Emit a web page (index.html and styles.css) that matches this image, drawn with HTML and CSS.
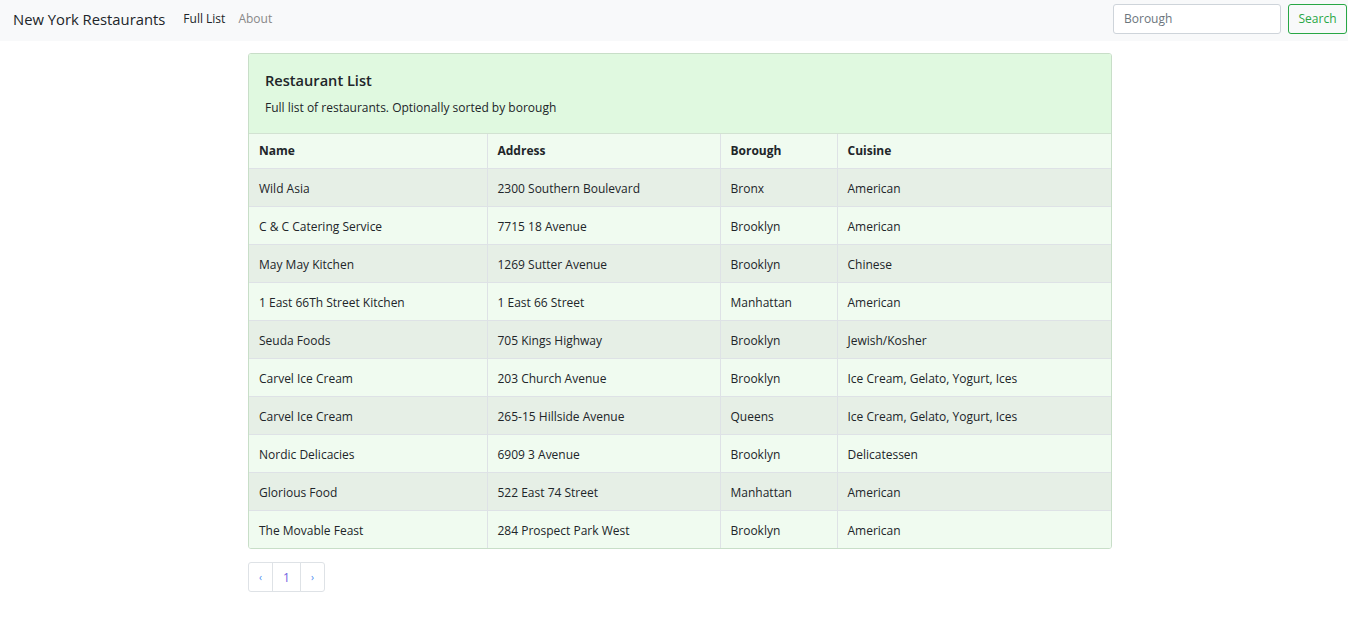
FILE: index.html
```html
<!DOCTYPE html>
<html lang="en">
<head>
<meta charset="utf-8">
<title>New York Restaurants</title>
<link rel="stylesheet" href="styles.css">
</head>
<body>
<nav class="navbar">
  <a class="brand" href="#">New York Restaurants</a>
  <ul class="nav">
    <li><a class="nav-link active" href="#">Full List</a></li>
    <li><a class="nav-link" href="#">About</a></li>
  </ul>
  <form class="search">
    <input class="search-input" type="text" placeholder="Borough">
    <button class="search-btn" type="button">Search</button>
  </form>
</nav>
<main class="container">
  <section class="card">
    <header class="card-header">
      <h1 class="card-title">Restaurant List</h1>
      <p class="card-sub">Full list of restaurants. Optionally sorted by borough</p>
    </header>
    <table class="table">
      <colgroup>
        <col class="c1"><col class="c2"><col class="c3"><col class="c4">
      </colgroup>
      <thead>
        <tr><th>Name</th><th>Address</th><th>Borough</th><th>Cuisine</th></tr>
      </thead>
      <tbody>
        <tr><td>Wild Asia</td><td>2300 Southern Boulevard</td><td>Bronx</td><td>American</td></tr>
        <tr><td>C &amp; C Catering Service</td><td>7715 18 Avenue</td><td>Brooklyn</td><td>American</td></tr>
        <tr><td>May May Kitchen</td><td>1269 Sutter Avenue</td><td>Brooklyn</td><td>Chinese</td></tr>
        <tr><td>1 East 66Th Street Kitchen</td><td>1 East 66 Street</td><td>Manhattan</td><td>American</td></tr>
        <tr><td>Seuda Foods</td><td>705 Kings Highway</td><td>Brooklyn</td><td>Jewish/Kosher</td></tr>
        <tr><td>Carvel Ice Cream</td><td>203 Church Avenue</td><td>Brooklyn</td><td>Ice Cream, Gelato, Yogurt, Ices</td></tr>
        <tr><td>Carvel Ice Cream</td><td>265-15 Hillside Avenue</td><td>Queens</td><td>Ice Cream, Gelato, Yogurt, Ices</td></tr>
        <tr><td>Nordic Delicacies</td><td>6909 3 Avenue</td><td>Brooklyn</td><td>Delicatessen</td></tr>
        <tr><td>Glorious Food</td><td>522 East 74 Street</td><td>Manhattan</td><td>American</td></tr>
        <tr><td>The Movable Feast</td><td>284 Prospect Park West</td><td>Brooklyn</td><td>American</td></tr>
      </tbody>
    </table>
  </section>
  <ul class="pagination">
    <li><a class="page-link chev" href="#">&lsaquo;</a></li>
    <li><a class="page-link" href="#">1</a></li>
    <li><a class="page-link chev" href="#">&rsaquo;</a></li>
  </ul>
</main>
</body>
</html>
```
FILE: styles.css
```css
* { box-sizing: border-box; }
body {
  margin: 0;
  font-family: "Open Sans", "Noto Sans", "Liberation Sans", sans-serif;
  font-size: 12px;
  color: #212529;
  background: #fff;
}
a { text-decoration: none; }
.navbar {
  display: flex;
  align-items: center;
  height: 41px;
  padding: 0 1px 4px 13px;
  background: #f8f9fa;
}
.brand {
  font-size: 14.8px;
  color: #212529;
  margin-right: 18px;
}
.nav {
  display: flex;
  list-style: none;
  margin: 0;
  padding: 0;
  gap: 13px;
  flex: 1;
}
.nav-link {
  font-size: 12px;
  color: #888;
}
.nav-link.active { color: #212529; }
.search {
  display: flex;
  gap: 7px;
}
.search-input {
  width: 168px;
  height: 30px;
  border: 1px solid #ced4da;
  border-radius: 3px;
  padding: 0 10px;
  font: inherit;
  font-size: 12px;
  color: #495057;
  background: #fff;
}
.search-input::placeholder { color: #6c757d; }
.search-btn {
  height: 30px;
  width: 59px;
  border: 1px solid #28a745;
  border-radius: 3px;
  background: transparent;
  color: #28a745;
  font: inherit;
  font-size: 12px;
  padding: 0;
}
.container {
  width: 864px;
  margin: 12px 0 0 calc(50% - 426px);
}
.card {
  border: 1px solid #c8dec8;
  border-radius: 3px;
  overflow: hidden;
}
.card-header {
  background: #e0f9e0;
  padding: 16px 16px 16px;
  border-bottom: 1px solid #d2e2d2;
}
.card-title {
  margin: 0 0 9px;
  font-size: 14.6px;
  font-weight: 600;
  line-height: 20px;
}
.card-sub {
  margin: 0;
  font-size: 12px;
  line-height: 18px;
}
.table {
  width: 100%;
  border-collapse: collapse;
  table-layout: fixed;
}
.c1 { width: 238px; }
.c2 { width: 233px; }
.c3 { width: 117px; }
.table th, .table td {
  text-align: left;
  padding: 0 10px;
  border-left: 1px solid #dee2e6;
  border-top: 1px solid #dee2e6;
  line-height: 18px;
}
.table td { padding-top: 3px; }
.table th:first-child, .table td:first-child { border-left: 0; }
.table thead tr { height: 34px; background: #f0fbf0; }
.table thead th { border-top: 0; font-weight: 700; }
.table tbody tr { height: 38px; background: #f0fbf0; }
.table tbody tr:nth-child(odd) { background: #e6efe6; }
.pagination {
  display: flex;
  list-style: none;
  padding: 0;
  margin: 13px 0 0;
}
.page-link {
  display: flex;
  align-items: center;
  justify-content: center;
  height: 30px;
  width: 29px;
  border: 1px solid #dee2e6;
  margin-left: -1px;
  color: #6f63e0;
  font-size: 12px;
  background: #fff;
}
.page-link.chev {
  width: 25px;
  font-size: 10px;
  color: #4c8cf0;
}
.pagination li:first-child .page-link { margin-left: 0; border-radius: 3px 0 0 3px; }
.pagination li:last-child .page-link { border-radius: 0 3px 3px 0; }
```
